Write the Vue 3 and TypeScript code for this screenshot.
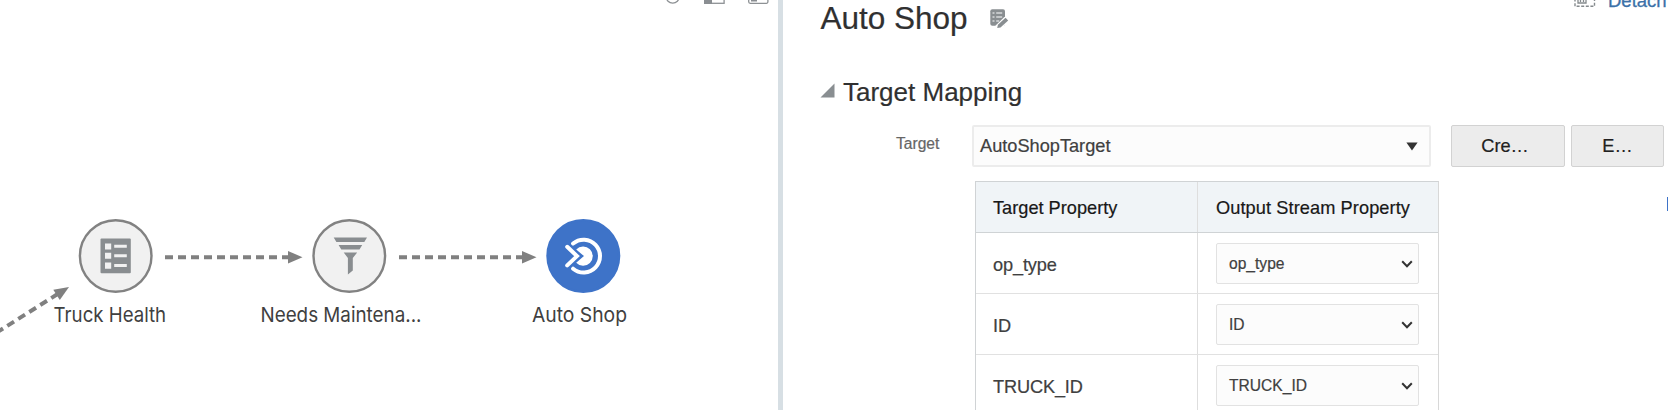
<script setup lang="ts">
interface PipelineNode { id: string; label: string; cx: number; labelX: number; width: number; active?: boolean }

const nodes: PipelineNode[] = [
  { id: 'table', label: 'Truck Health', cx: 115.7, labelX: 53.6, width: 112.5 },
  { id: 'filter', label: 'Needs Maintena...', cx: 349.3, labelX: 260.5, width: 161 },
  { id: 'target', label: 'Auto Shop', cx: 583.3, labelX: 532, width: 95, active: true },
]
const links: number[] = [165, 399]
const rows: string[] = ['op_type', 'ID', 'TRUCK_ID']
</script>

<template>
  <div class="app">
    <section class="canvas">
      <svg width="778" height="410" viewBox="0 0 778 410">
        <g class="tools">
          <circle cx="672.7" cy="-3.5" r="6.6" />
          <rect x="704.7" y="-12" width="19.4" height="15.3" />
          <rect class="solid" x="704" y="-12" width="8" height="16" />
          <rect x="748.7" y="-12" width="19.2" height="15.3" rx="1.5" />
          <rect class="solid" x="751" y="-2" width="6" height="3.5" />
        </g>
        <g class="link">
          <path class="dash" d="M58 293.8L-8 335.5" />
          <path class="head" d="M69 287L53.3 289.7L59.8 300Z" />
        </g>
        <g v-for="x in links" :key="x" class="link">
          <path class="dash" :d="`M${x} 257.2H${x + 124}`" />
          <path class="head" :d="`M${x + 123} 251L${x + 137.5} 257.2L${x + 123} 263.4Z`" />
        </g>
        <g v-for="n in nodes" :key="n.id">
          <circle :class="['ring', { active: n.active }]" :cx="n.cx" cy="256" r="35.8" />
          <text class="label" :x="n.labelX" y="321.9" :textLength="n.width" lengthAdjust="spacingAndGlyphs">{{ n.label }}</text>
        </g>
        <g class="glyph">
          <rect x="100.5" y="238.6" width="30.3" height="34.6" rx="1" />
          <path class="hole" d="M105 243.4h6.2v6h-6.2zM105 252.8h6.2v6h-6.2zM105 262.5h6.2v6.2h-6.2zM114.2 244.8h12.6v3h-12.6zM114.2 254.2h12.6v3h-12.6zM114.2 263.9h12.6v3h-12.6z" />
          <path d="M333.7 237.5H367L364.3 242H336.4ZM338.6 245H362.2L359.5 249.5H341.3ZM343.7 252.5H357.2L352.8 258V270.4L347.9 274.6V258Z" />
        </g>
        <g class="target">
          <path d="M573.1 243.5A16.4 16.4 0 1 1 573.1 268.7" />
          <path class="heart" d="M576.2 249.5A9.6 9.6 0 1 1 576.2 262.7L584 256.1Z" />
          <path d="M567.2 246.8L577 256.1L567.2 265.4" />
        </g>
      </svg>
    </section>
    <div class="splitter"></div>
    <section class="panel">
      <header>
        <h1>Auto Shop</h1>
        <svg class="edit" width="20" height="20" viewBox="0 0 20 20">
          <rect x="1.3" y=".3" width="14.7" height="16.4" rx="2" fill="#898e91" />
          <path d="M3.5 4h2M3.5 8h2M3.5 12h2M7.2 4h6M7.2 8h6M7.2 12h3" stroke="#d6d9da" stroke-width="1.3" />
          <path d="M8.5 19L17.7 9.9" stroke="#fff" stroke-width="6" />
          <path d="M8.2 18.9L8.9 15.7L16.5 8.7L19.2 11.4L11.5 18.5Z" fill="#898e91" />
        </svg>
        <span class="detach">
          <svg width="22" height="18" viewBox="0 0 22 18" fill="none" stroke="#858a8d">
            <rect x="1" y="1" width="19.5" height="16.2" stroke-width="1.4" stroke-dasharray="3 1.6" />
            <path d="M4 11v3h8v-3M6.5 10v3M9.5 10v3" stroke-width="1.3" />
          </svg>
          <a>Detach</a>
        </span>
      </header>
      <h2><svg width="15" height="15"><path d="M.5 14.5H14.5V.5Z" fill="#898e91" /></svg><span>Target Mapping</span></h2>
      <div class="form">
        <label>Target</label>
        <div class="combo"><span>AutoShopTarget</span><svg width="12" height="9"><path d="M.4 .5H11.6L6 8.5Z" fill="#333" /></svg></div>
        <button class="create">Cre…</button>
        <button class="editbtn">E…</button>
      </div>
      <div class="grid">
        <div class="row head-row"><div class="cell">Target Property</div><div class="cell output">Output Stream Property</div></div>
        <div v-for="r in rows" :key="r" class="row">
          <div class="cell name">{{ r }}</div>
          <div class="cell pick">
            <div class="select"><span>{{ r }}</span><svg width="12" height="8"><path d="M1.2 1.3L6 6.2L10.8 1.3" fill="none" stroke="#333" stroke-width="2" /></svg></div>
          </div>
        </div>
      </div>
      <i class="marker"></i>
    </section>
  </div>
</template>

<style>
html, body { overflow: hidden; background: #fff; }
</style>

<style scoped>
.app { display: flex; width: 1668px; height: 410px; overflow: hidden; font-family: "Liberation Sans", Arial, sans-serif; color: #333; background: #fff; }
.app * { box-sizing: border-box; }
.canvas { width: 778px; flex: none; }
.canvas svg { display: block; }
.tools { fill: none; stroke: #8d9194; stroke-width: 1.3; }
.tools .solid { fill: #8a8e92; stroke: none; }
.dash { fill: none; stroke: #808080; stroke-width: 4; stroke-dasharray: 8 5; }
.head { fill: #808080; }
.ring { fill: #f1f1f1; stroke: #828282; stroke-width: 2.4; }
.ring.active { fill: #3e73c8; stroke: #3e73c8; }
.label { font-family: Inter, "Liberation Sans", sans-serif; font-size: 20.5px; fill: #404040; }
.glyph { fill: #898d90; }
.glyph .hole { fill: #f1f1f1; }
.target { fill: none; stroke: #fff; stroke-width: 4; stroke-linecap: round; }
.target .heart { fill: #fff; stroke: none; }
.splitter { width: 5px; flex: none; background: #d7dfe4; }
.panel { position: relative; flex: 1; min-width: 0; padding-left: 37px; -webkit-text-stroke: .2px currentColor; }
header { display: flex; height: 72px; }
h1 { margin: 0; width: 169px; padding-left: .5px; font-size: 31.5px; line-height: 36px; font-weight: 400; color: #303030; white-space: nowrap; }
.edit { margin-top: 9px; }
.detach { display: flex; margin-left: 565px; gap: 12px; margin-top: -11px; }
.detach a { color: #3c71a8; font-size: 18.5px; line-height: 21px; margin-top: 1px; -webkit-text-stroke: .3px #3c71a8; }
h2 { margin: 0; display: flex; gap: 8px; height: 53px; font-size: 26px; line-height: 40px; font-weight: 400; color: #303030; white-space: nowrap; }
h2 svg { margin-top: 11px; }
.form { display: flex; height: 42px; padding-left: 76px; }
label { width: 76px; padding-top: 10px; font-size: 15.6px; line-height: 18px; color: #666; }
.combo { width: 459px; height: 42px; border: 2px solid #ececec; border-radius: 2px; background: #fcfcfc; display: flex; align-items: center; padding: 0 11px 0 6px; justify-content: space-between; font-size: 18.2px; color: #404040; }
.combo span { padding-top: 1px; }
button { height: 42px; margin: 0; padding: 1px 0 0; border: 1.5px solid #d2d2d2; border-radius: 2px; background: #ececec; font: 18.2px "Liberation Sans", Arial, sans-serif; color: #202020; }
.create { width: 114px; margin-left: 20px; padding-right: 6px; }
.editbtn { width: 93px; margin-left: 6px; }
.grid { width: 464px; height: 243px; margin: 14px 0 0 155px; border: 1px solid #d0d3d5; border-right-color: #d8d8d8; }
.row { display: grid; grid-template-columns: 222px 1fr; height: 61px; border-bottom: 1px solid #e1e1e1; font-size: 18.2px; }
.row .cell { display: flex; align-items: center; padding-left: 18px; color: #404040; }
.row .cell:first-child { padding-left: 17px; border-right: 1px solid #dedede; }
.head-row { height: 51px; background: #f0f4f7; border-color: #cfd3d5; }
.head-row .cell { color: #181818; padding-top: 2px; }
.head-row .output { letter-spacing: .09px; }
.row .name { padding-top: 4px; letter-spacing: -.15px; }
.row .pick { align-items: flex-start; padding-top: 10px; }
.select { width: 203px; height: 41px; padding: 0 5px 0 12px; display: flex; justify-content: space-between; align-items: center; border: 1px solid #e2e2e2; border-radius: 2px; background: #fcfcfc; font-size: 15.6px; }
.marker { position: absolute; right: 0; top: 197px; width: 1px; height: 14px; background: #3e73c8; }
</style>
